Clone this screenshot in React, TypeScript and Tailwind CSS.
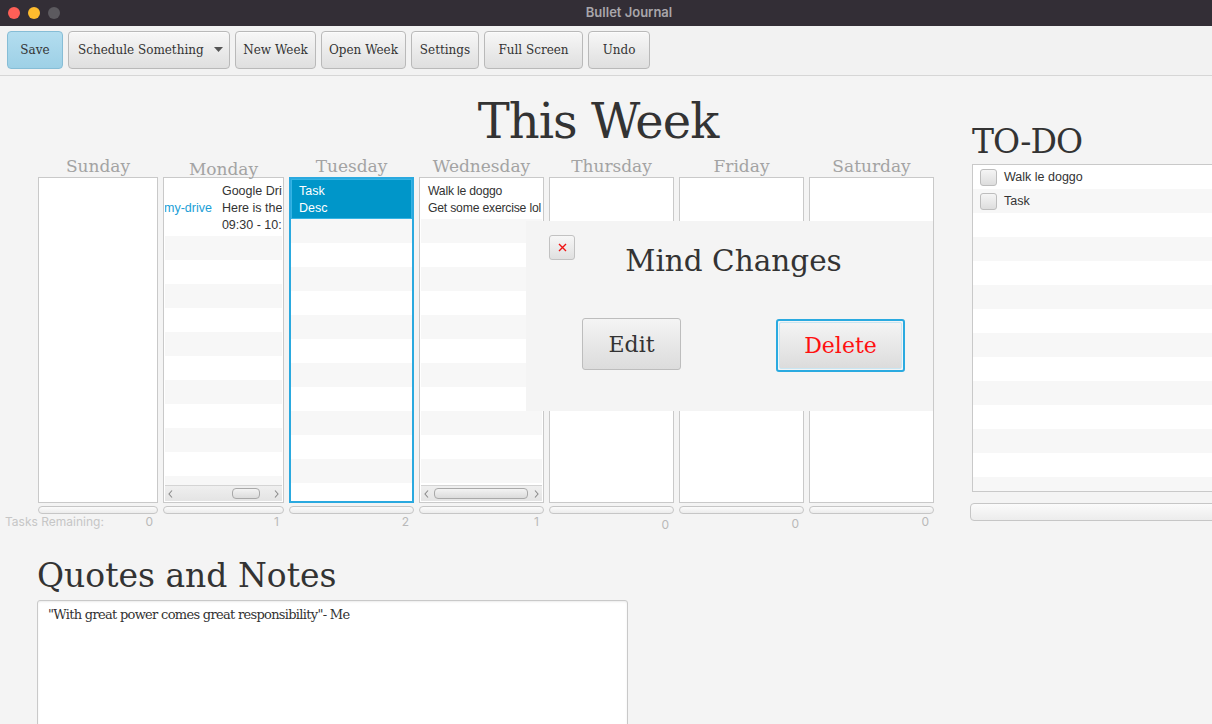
import React from "react";

const serif = "font-['DejaVu_Serif',serif]";
const sans = "font-['Liberation_Sans',Arial,sans-serif]";

const btn =
  "h-[38px] rounded-[4px] border border-[#b9b9b9] bg-gradient-to-b from-[#f7f7f7] to-[#dfdfdf] text-[12px] text-[#333] flex items-center justify-center shadow-[0_1px_0_rgba(255,255,255,0.6)_inset]";

function TitleBar() {
  return (
    <div className="h-[26px] bg-[#332e36] flex items-center relative">
      <div className="flex items-center gap-[8px] pl-[8px]">
        <div className="w-[12px] h-[12px] rounded-full bg-[#fe5f57]" />
        <div className="w-[12px] h-[12px] rounded-full bg-[#febc2e]" />
        <div className="w-[12px] h-[12px] rounded-full bg-[#5c5a5f]" />
      </div>
      <div className="flex-1 flex justify-center pr-[14px]">
        <span className={`font-['Inter',sans-serif] text-[13px] font-semibold text-[#a9a6ab]`}>Bullet Journal</span>
      </div>
    </div>
  );
}

function Toolbar() {
  return (
    <div className={`${serif} h-[50px] bg-[#f2f2f2] border-b border-[#d6d6d6] flex items-start pt-[5px] pl-[7px] gap-[5px]`}>
      <div className="h-[38px] w-[56px] rounded-[4px] border border-[#86bdd6] bg-gradient-to-b from-[#b3ddef] to-[#9dd0e6] text-[12px] text-[#333] flex items-center justify-center">
        Save
      </div>
      <div className={`${btn} w-[162px] justify-start pl-[9px]`}>
        <span>Schedule Something</span>
        <svg width="9" height="6" viewBox="0 0 9 6" className="ml-[10px]">
          <path d="M0 0 L9 0 L4.5 5 Z" fill="#555" />
        </svg>
      </div>
      <div className={`${btn} w-[81px]`}>New Week</div>
      <div className={`${btn} w-[85px]`}>Open Week</div>
      <div className={`${btn} w-[68px]`}>Settings</div>
      <div className={`${btn} w-[99px]`}>Full Screen</div>
      <div className={`${btn} w-[62px]`}>Undo</div>
    </div>
  );
}

function Stripes({ count, startGray }: { count: number; startGray: boolean }) {
  return (
    <>
      {Array.from({ length: count }).map((_, i) => (
        <div
          key={i}
          className={`h-[24px] shrink-0 ${(i % 2 === 0) === startGray ? "bg-[#f7f7f7]" : "bg-white"}`}
        />
      ))}
    </>
  );
}

function HScroll({ thumbLeft, thumbWidth }: { thumbLeft: number; thumbWidth: number }) {
  return (
    <div className="h-[16px] shrink-0 border-t border-[#d4d4d4] bg-gradient-to-b from-[#efefef] to-[#e4e4e4] flex items-center">
      <svg width="12" height="10" viewBox="0 0 12 10" className="shrink-0">
        <path d="M7 1.5 L4 5 L7 8.5" stroke="#8a8a8a" strokeWidth="1.1" fill="none" />
      </svg>
      <div className="flex-1 relative h-full">
        <div
          className="absolute top-[2px] h-[11px] rounded-[4px] border border-[#a9a9a9] bg-gradient-to-b from-[#f3f3f3] to-[#dcdcdc]"
          style={{ left: thumbLeft, width: thumbWidth }}
        />
      </div>
      <svg width="12" height="10" viewBox="0 0 12 10" className="shrink-0">
        <path d="M5 1.5 L8 5 L5 8.5" stroke="#8a8a8a" strokeWidth="1.1" fill="none" />
      </svg>
    </div>
  );
}

function Progress({ h = 8 }: { h?: number }) {
  return (
    <div
      className={`w-full rounded-[4px] border border-[#c6c6c6] bg-gradient-to-b from-[#fbfbfb] to-[#ececec] ${
        h === 8 ? "h-[8px]" : "h-[18px]"
      }`}
    />
  );
}

type Day = {
  name: string;
  w: string;
  count: number;
  labelCls?: string;
  numCls?: string;
};

function DayColumn({ day, children, boxCls }: { day: Day; children?: React.ReactNode; boxCls?: string }) {
  return (
    <div className={`${day.w} flex flex-col shrink-0`}>
      <div className={`${serif} h-[22px] text-[17px] leading-[22px] text-[#a3a3a3] text-center ${day.labelCls ?? ""}`}>
        {day.name}
      </div>
      <div
        className={`h-[326px] bg-white flex flex-col overflow-hidden ${
          boxCls ?? "border border-[#c9c9c9] p-[1px]"
        }`}
      >
        {children}
      </div>
      <div className="mt-[3px]">
        <Progress />
      </div>
    </div>
  );
}

export default function App() {
  const days: Day[] = [
    { name: "Sunday", w: "w-[120px]", count: 0 },
    { name: "Monday", w: "w-[121px]", count: 1, labelCls: "translate-y-[3px]" },
    { name: "Tuesday", w: "w-[125px]", count: 2 },
    { name: "Wednesday", w: "w-[125px]", count: 1 },
    { name: "Thursday", w: "w-[125px]", count: 0, numCls: "translate-y-[3px]" },
    { name: "Friday", w: "w-[125px]", count: 0, numCls: "translate-y-[2px]" },
    { name: "Saturday", w: "w-[125px]", count: 0 },
  ];

  return (
    <div className="w-[1212px] h-[724px] overflow-hidden bg-[#f4f4f4] relative">
      <TitleBar />
      <Toolbar />
      <div className="flex">
        {/* Left: week + notes */}
        <div className="w-[970px] shrink-0 flex flex-col">
          <div className={`${serif} pl-[226px] mt-[21px] text-center text-[48px] leading-[48px] tracking-[-1px] text-[#333]`}>
            This Week
          </div>
          <div className="mt-[10px] pl-[38px] flex gap-[5px]">
            <DayColumn day={days[0]} />
            <DayColumn day={days[1]}>
              <div className={`${sans} h-[57px] shrink-0 bg-white flex items-center pt-[1px] text-[12.5px] leading-[17px] whitespace-nowrap overflow-hidden`}>
                <span className="text-[#1a9ed6] -ml-[1px]">my-drive</span>
                <div className="ml-[10px] text-[#333]">
                  <div>Google Drive</div>
                  <div>Here is the link</div>
                  <div>09:30 - 10:30</div>
                </div>
              </div>
              <div className="flex-1 flex flex-col overflow-hidden">
                <Stripes count={11} startGray={true} />
              </div>
              <HScroll thumbLeft={55} thumbWidth={28} />
            </DayColumn>
            <DayColumn day={days[2]} boxCls="border-2 border-[#2aa9df]">
              <div className={`${sans} h-[40px] shrink-0 bg-[#0096c9] border border-[#35b4e4] px-[7px] pt-[3px] text-[12.5px] leading-[17px] text-white whitespace-nowrap`}>
                <div>Task</div>
                <div>Desc</div>
              </div>
              <Stripes count={13} startGray={true} />
            </DayColumn>
            <DayColumn day={days[3]}>
              <div className={`${sans} h-[40px] shrink-0 bg-white px-[7px] pt-[4px] text-[12.2px] leading-[17px] tracking-[-0.2px] text-[#333] whitespace-nowrap overflow-hidden`}>
                <div>Walk le doggo</div>
                <div>Get some exercise lol</div>
              </div>
              <div className="flex-1 flex flex-col overflow-hidden">
                <Stripes count={12} startGray={true} />
              </div>
              <HScroll thumbLeft={1} thumbWidth={94} />
            </DayColumn>
            <DayColumn day={days[4]} />
            <DayColumn day={days[5]} />
            <DayColumn day={days[6]} />
          </div>
          <div className="pl-[38px] flex gap-[5px] h-[16px]">
            {days.map((d, i) => (
              <div
                key={d.name}
                className={`${d.w} shrink-0 flex justify-between font-['Inter',sans-serif] text-[12px] leading-[16px] text-[#b9b9b9] ${d.numCls ?? ""}`}
              >
                <span className={i === 0 ? "-ml-[33px] text-[#c6c6c6]" : ""}>{i === 0 ? "Tasks Remaining:" : ""}</span>
                <span className="pr-[5px]">{d.count}</span>
              </div>
            ))}
          </div>
          <div className={`${serif} pl-[37px] mt-[30px] text-[33px] leading-[32px] text-[#333]`}>Quotes and Notes</div>
          <div className="ml-[37px] mt-[8px] w-[591px] h-[160px] bg-white border border-[#c9c9c9] rounded-t-[3px] shadow-[inset_0_1px_2px_rgba(0,0,0,0.08)] px-[10px] pt-[4px]">
            <div className={`${serif} text-[13px] tracking-[-0.7px] text-[#333]`}>
              "With great power comes great responsibility"- Me
            </div>
          </div>
        </div>

        {/* Right: TO-DO */}
        <div className="w-[260px] shrink-0 flex flex-col">
          <div className={`${serif} pl-[2px] mt-[49px] text-[33px] leading-[34px] tracking-[-1px] text-[#333]`}>TO-DO</div>
          <div className="ml-[2px] mt-[5px] h-[328px] bg-white border border-[#c9c9c9] flex flex-col overflow-hidden">
            {["Walk le doggo", "Task"].map((t, i) => (
              <div
                key={t}
                className={`h-[24px] shrink-0 flex items-center pl-[7px] ${i % 2 === 1 ? "bg-[#f7f7f7]" : "bg-white"}`}
              >
                <div className="w-[17px] h-[17px] rounded-[3px] border border-[#bdbdbd] bg-gradient-to-b from-[#f5f5f5] to-[#dddddd]" />
                <span className={`${sans} ml-[7px] text-[12.5px] text-[#333]`}>{t}</span>
              </div>
            ))}
            <Stripes count={12} startGray={false} />
          </div>
          <div className="mt-[11px]">
            <Progress h={18} />
          </div>
        </div>
      </div>

      {/* Dialog overlay */}
      <div className="absolute left-[526px] top-[221px] w-[407px] h-[190px] bg-[#f4f4f4] flex flex-col">
        <div className="flex items-start pl-[23px] pr-[41px] pt-[14px]">
          <div className="w-[26px] h-[25px] rounded-[3px] border border-[#c2c2c2] bg-gradient-to-b from-[#f7f7f7] to-[#e0e0e0] flex items-center justify-center">
            <svg width="9" height="9" viewBox="0 0 9 9">
              <path d="M1 1 L8 8 M8 1 L1 8" stroke="#f01414" strokeWidth="1.4" />
            </svg>
          </div>
          <div className={`${serif} flex-1 text-center text-[29.5px] leading-[29px] mt-[12px] text-[#333]`}>
            Mind Changes
          </div>
        </div>
        <div className="flex items-start pl-[56px] mt-[42px]">
          <div className="w-[99px] h-[52px] rounded-[3px] border border-[#bdbdbd] bg-gradient-to-b from-[#f4f4f4] to-[#dcdcdc] flex items-center justify-center">
            <span className={`${serif} text-[22px] text-[#333]`}>Edit</span>
          </div>
          <div className="ml-[95px] mt-[1px] w-[129px] h-[53px] rounded-[3px] border-2 border-[#2aaae0] p-[1px]">
            <div className="w-full h-full rounded-[2px] border border-[#c9e6f3] bg-gradient-to-b from-[#f4f4f4] to-[#dcdcdc] flex items-center justify-center">
              <span className={`${serif} text-[22px] text-[#ff1010]`}>Delete</span>
            </div>
          </div>
        </div>
      </div>
    </div>
  );
}
